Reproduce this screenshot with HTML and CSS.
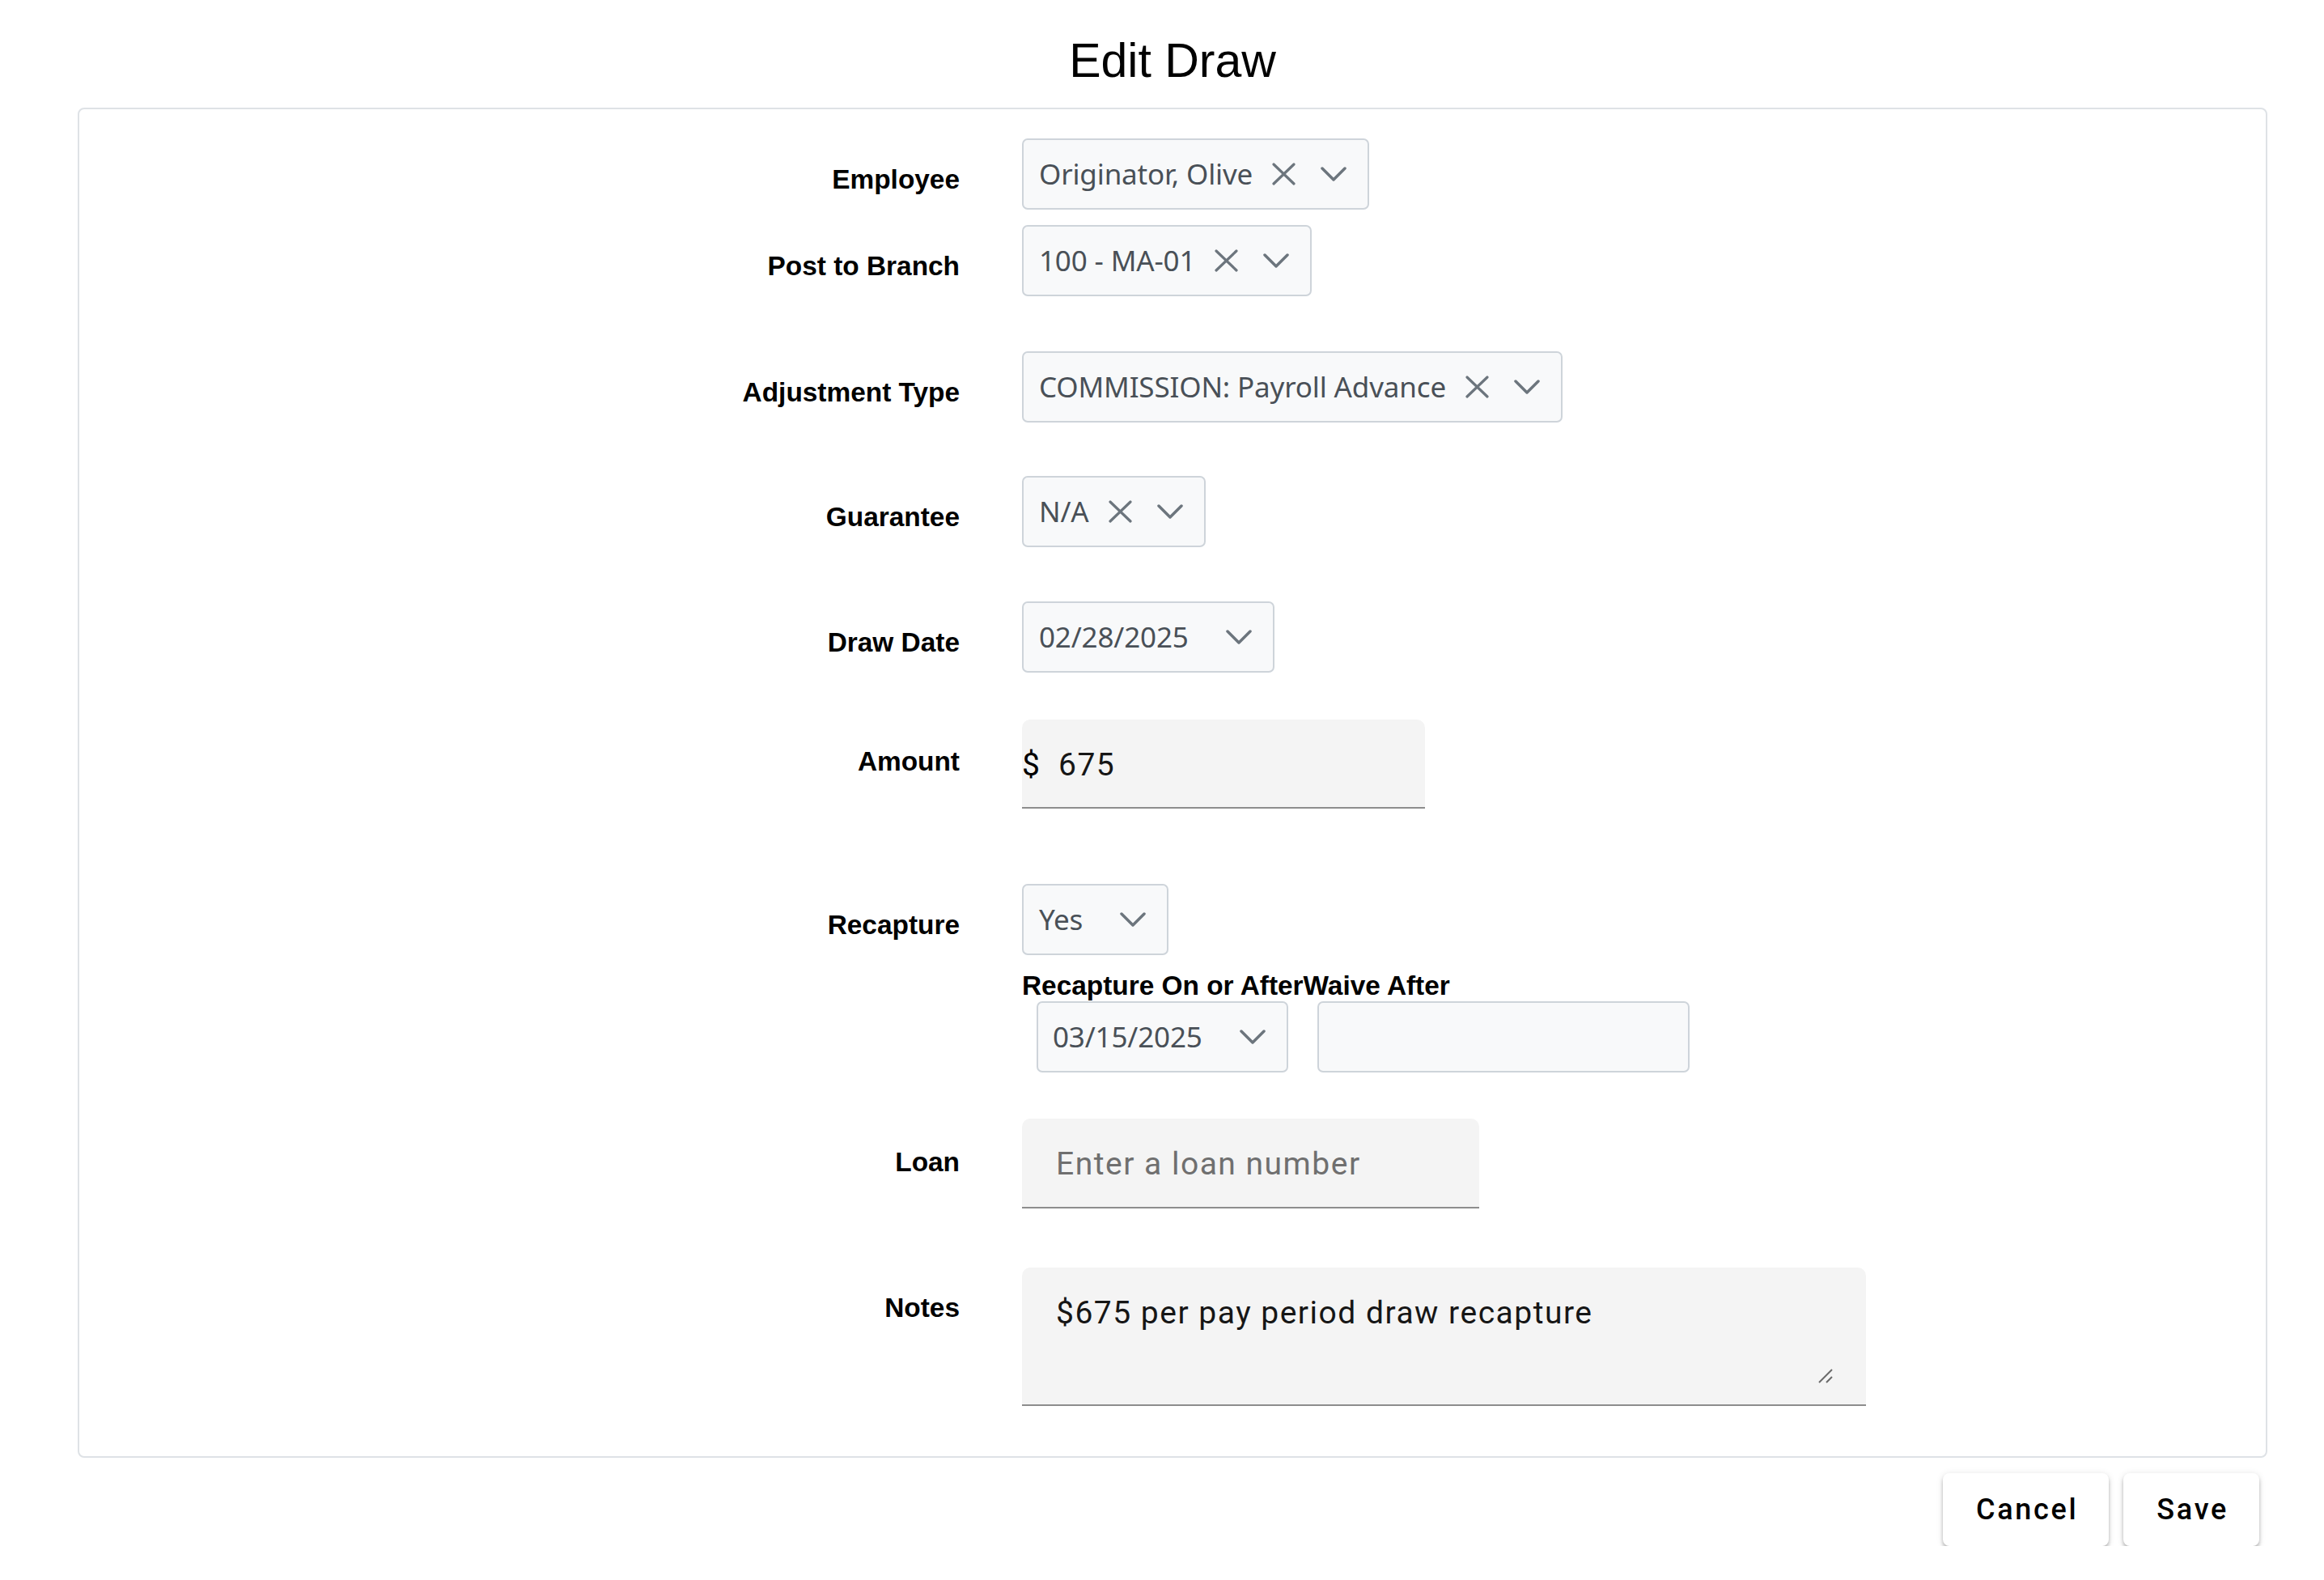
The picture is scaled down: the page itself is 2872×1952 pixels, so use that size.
FILE: index.html
```html
<!DOCTYPE html>
<html lang="en">
<head>
<meta charset="utf-8">
<title>Edit Draw</title>
<link rel="stylesheet" href="styles.css">
</head>
<body>
<div class="page">
  <h1 class="title">Edit Draw</h1>
  <div class="card">
    <form class="form">
      <div class="row">
        <label class="lbl">Employee</label>
        <div class="ctl">
          <div class="select"><span class="val">Originator, Olive</span>
            <svg class="ico-x" width="29" height="28" viewBox="0 0 29 28"><path d="M2 2L27 26M27 2L2 26" stroke="#6c757d" stroke-width="3.2" stroke-linecap="round"/></svg>
            <svg class="ico-chev" width="32" height="18" viewBox="0 0 32 18"><path d="M2 2L16 16L30 2" fill="none" stroke="#6c757d" stroke-width="3.5" stroke-linecap="round" stroke-linejoin="round"/></svg>
          </div>
        </div>
      </div>
      <div class="row m-post">
        <label class="lbl">Post to Branch</label>
        <div class="ctl">
          <div class="select"><span class="val">100 - MA-01</span>
            <svg class="ico-x" width="29" height="28" viewBox="0 0 29 28"><path d="M2 2L27 26M27 2L2 26" stroke="#6c757d" stroke-width="3.2" stroke-linecap="round"/></svg>
            <svg class="ico-chev" width="32" height="18" viewBox="0 0 32 18"><path d="M2 2L16 16L30 2" fill="none" stroke="#6c757d" stroke-width="3.5" stroke-linecap="round" stroke-linejoin="round"/></svg>
          </div>
        </div>
      </div>
      <div class="row m-adj">
        <label class="lbl">Adjustment Type</label>
        <div class="ctl">
          <div class="select"><span class="val">COMMISSION: Payroll Advance</span>
            <svg class="ico-x" width="29" height="28" viewBox="0 0 29 28"><path d="M2 2L27 26M27 2L2 26" stroke="#6c757d" stroke-width="3.2" stroke-linecap="round"/></svg>
            <svg class="ico-chev" width="32" height="18" viewBox="0 0 32 18"><path d="M2 2L16 16L30 2" fill="none" stroke="#6c757d" stroke-width="3.5" stroke-linecap="round" stroke-linejoin="round"/></svg>
          </div>
        </div>
      </div>
      <div class="row m-guar">
        <label class="lbl">Guarantee</label>
        <div class="ctl">
          <div class="select"><span class="val">N/A</span>
            <svg class="ico-x" width="29" height="28" viewBox="0 0 29 28"><path d="M2 2L27 26M27 2L2 26" stroke="#6c757d" stroke-width="3.2" stroke-linecap="round"/></svg>
            <svg class="ico-chev" width="32" height="18" viewBox="0 0 32 18"><path d="M2 2L16 16L30 2" fill="none" stroke="#6c757d" stroke-width="3.5" stroke-linecap="round" stroke-linejoin="round"/></svg>
          </div>
        </div>
      </div>
      <div class="row m-draw">
        <label class="lbl">Draw Date</label>
        <div class="ctl">
          <div class="select date"><span class="val">02/28/2025</span>
            <svg class="ico-chev" width="32" height="18" viewBox="0 0 32 18"><path d="M2 2L16 16L30 2" fill="none" stroke="#6c757d" stroke-width="3.5" stroke-linecap="round" stroke-linejoin="round"/></svg>
          </div>
        </div>
      </div>
      <div class="row m-amount">
        <label class="lbl lbl-amount">Amount</label>
        <div class="ctl">
          <div class="field amount"><span class="prefix">$</span><span class="text">675</span></div>
        </div>
      </div>
      <div class="row m-recap">
        <label class="lbl">Recapture</label>
        <div class="ctl">
          <div class="select date"><span class="val">Yes</span>
            <svg class="ico-chev" width="32" height="18" viewBox="0 0 32 18"><path d="M2 2L16 16L30 2" fill="none" stroke="#6c757d" stroke-width="3.5" stroke-linecap="round" stroke-linejoin="round"/></svg>
          </div>
          <div class="sub">
            <div class="subcol">
              <span class="sublbl">Recapture On or After</span>
              <div class="select date first"><span class="val">03/15/2025</span>
                <svg class="ico-chev" width="32" height="18" viewBox="0 0 32 18"><path d="M2 2L16 16L30 2" fill="none" stroke="#6c757d" stroke-width="3.5" stroke-linecap="round" stroke-linejoin="round"/></svg>
              </div>
            </div>
            <div class="subcol">
              <span class="sublbl">Waive After</span>
              <div class="box-input"></div>
            </div>
          </div>
        </div>
      </div>
      <div class="row m-loan">
        <label class="lbl lbl-loan">Loan</label>
        <div class="ctl">
          <div class="field loan"><span class="placeholder">Enter a loan number</span></div>
        </div>
      </div>
      <div class="row m-notes">
        <label class="lbl lbl-notes">Notes</label>
        <div class="ctl">
          <div class="field notes"><span class="text">$675 per pay period draw recapture</span>
            <svg class="grip" width="20" height="20" viewBox="0 0 20 20"><path d="M2 18L18 2M11 18L18 11" stroke="#6a6a6a" stroke-width="2"/></svg>
          </div>
        </div>
      </div>
    </form>
  </div>
  <div class="actions">
    <button class="btn" type="button">Cancel</button>
    <button class="btn" type="button">Save</button>
  </div>
</div>
</body>
</html>
```

FILE: styles.css
```css
* { box-sizing: border-box; }
html, body { margin: 0; padding: 0; background: #fff; }
body { font-family: "Liberation Sans", Arial, sans-serif; color: #000; }

.page {
  margin-left: 96px;
  width: 2706px;
  padding-top: 41px;
}

.title {
  margin: 0 0 24px 0;
  font-family: "Liberation Sans", Arial, sans-serif;
  font-weight: 400;
  font-size: 59px;
  line-height: 68px;
  text-align: center;
  color: #000;
}

.card {
  border: 2px solid #dee2e6;
  border-radius: 8px;
  padding: 36px 0 62px 0;
}

.form { display: flex; flex-direction: column; margin: 0; }

.row { display: flex; align-items: flex-start; gap: 77px; }
.m-post { margin-top: 19px; }
.m-adj { margin-top: 68px; }
.m-guar { margin-top: 66px; }
.m-draw { margin-top: 67px; }
.m-amount { margin-top: 58px; }
.m-recap { margin-top: 93px; }
.m-loan { margin-top: 57px; }
.m-notes { margin-top: 73px; }

.lbl {
  flex: 0 0 1088px;
  text-align: right;
  font-weight: 700;
  font-size: 33.4px;
  line-height: 38px;
  padding-top: 32px;
  color: #000;
}
.lbl-amount { padding-top: 33px; }
.lbl-loan { padding-top: 35px; }
.lbl-notes { padding-top: 31px; }

.ctl { display: flex; flex-direction: column; align-items: flex-start; }

.select {
  display: inline-flex;
  align-items: center;
  height: 88px;
  padding: 0 26px 0 19px;
  background: #f8f9fa;
  border: 2px solid #ced4da;
  border-radius: 7px;
  font-family: "Noto Sans", "Open Sans", sans-serif;
  font-size: 35px;
  line-height: 48px;
  letter-spacing: -0.15px;
  color: #495057;
  white-space: nowrap;
}
.select .val { display: block; }
.ico-x { display: block; margin-left: 24px; flex: none; }
.ico-chev { display: block; margin-left: 31px; flex: none; }
.select.date .ico-chev { margin-left: 46px; }
.select.first { margin-left: 18px; padding-left: 18px; }

.sub { display: flex; margin-top: 19px; }
.subcol { display: flex; flex-direction: column; align-items: flex-start; }
.sublbl {
  font-weight: 700;
  font-size: 33.4px;
  line-height: 38px;
  white-space: nowrap;
  color: #000;
}
.box-input {
  margin-left: 17px;
  width: 460px;
  height: 88px;
  background: #f8f9fa;
  border: 2px solid #ced4da;
  border-radius: 7px;
}

.field {
  position: relative;
  background: #f4f4f4;
  border-bottom: 2px solid #8d8d8d;
  border-radius: 10px 10px 0 0;
  font-family: Roboto, "Liberation Sans", sans-serif;
  font-size: 39px;
  line-height: 46px;
  letter-spacing: 1.5px;
  color: #161616;
  padding-top: 33px;
  white-space: nowrap;
}
.amount { width: 498px; height: 110px; padding-left: 0; }
.amount .prefix { display: inline-block; width: 45px; color: #000; }
.loan { width: 565px; height: 111px; padding-left: 42px; }
.loan .placeholder { color: #6f6f6f; }
.notes { width: 1043px; height: 171px; padding-left: 42px; }
.grip { position: absolute; right: 40px; bottom: 25px; display: block; }

.actions {
  display: flex;
  justify-content: flex-end;
  gap: 18px;
  margin-top: 19px;
  padding-right: 10px;
}
.btn {
  height: 90px;
  padding: 0 38px 0 41px;
  border: none;
  border-radius: 8px;
  background: #fff;
  color: #000;
  font-family: Roboto, "Liberation Sans", sans-serif;
  font-weight: 500;
  font-size: 36px;
  letter-spacing: 2.7px;
  box-shadow: 0 4px 4px rgba(0,0,0,0.24), 0 1px 8px rgba(0,0,0,0.12);
  cursor: pointer;
}
```
